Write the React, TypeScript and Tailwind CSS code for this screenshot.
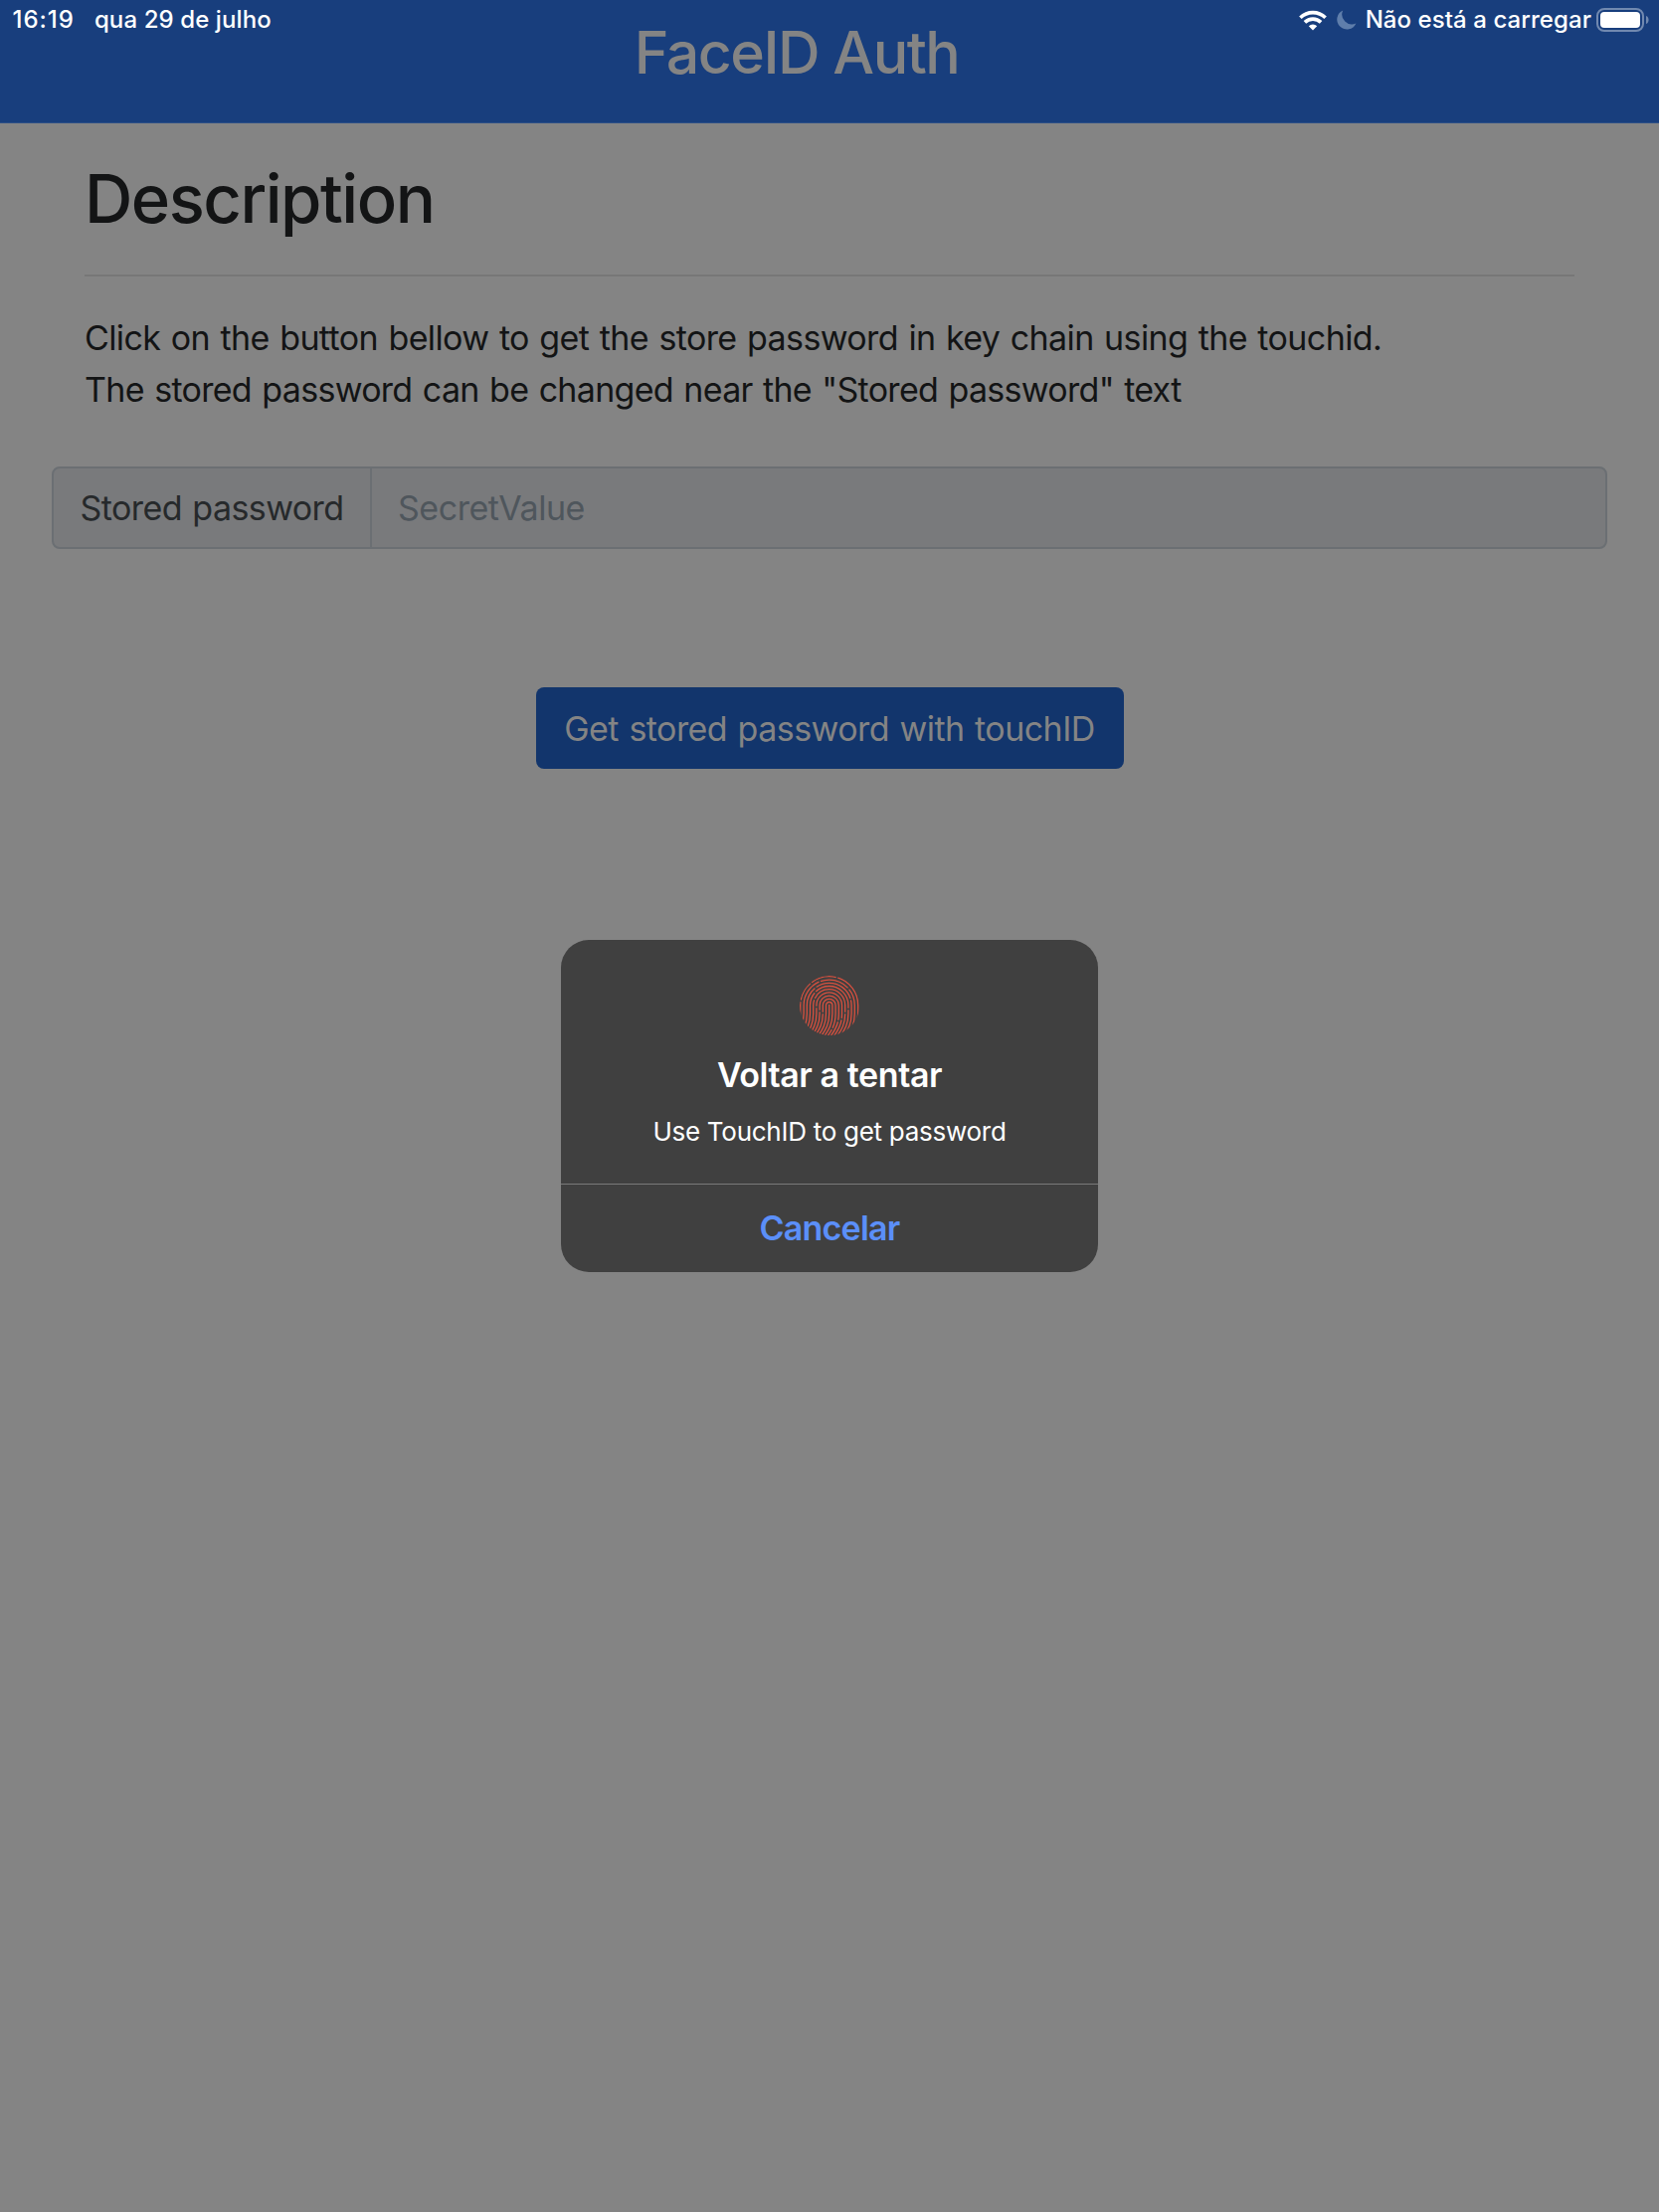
const rings = [
  { r: 3.2, dash: "120" },
  { r: 6.4, dash: "26 1.5 50 1.5 60" },
  { r: 9.6, dash: "28 1.5 50 1.5 60" },
  { r: 12.8, dash: "32 1.5 54 1.5 60" },
  { r: 16, dash: "40 1.5 50 1.5 60" },
  { r: 19.2, dash: "48 1.5 48 1.5 60" },
  { r: 22.4, dash: "54 1.5 42 1.5 60" },
  { r: 25.6, dash: "64 1.5 30 1.5 60" },
  { r: 29, dash: "38 1.5 20 1.5 26 1.5 60" },
];

function Fingerprint() {
  return (
    <svg width="60" height="60" viewBox="0 0 60 60" fill="none" stroke="#d8503f" strokeWidth="1.3">
      <clipPath id="pad">
        <circle cx="30" cy="30" r="30" />
      </clipPath>
      <g clipPath="url(#pad)">
        <path d="M29.7 29 V38 C29.7 48 26.7 54 20.7 62" />
        {rings.map(({ r, dash }) => (
          <path
            key={r}
            strokeDasharray={dash}
            d={`M${29.7 - r - 9} 62 C${29.7 - r - 3} 54 ${29.7 - r} 48 ${29.7 - r} 38 V29.7 A${r} ${r} 0 0 1 ${29.7 + r} 29.7 V38 C${29.7 + r} 48 ${29.7 + r - 3} 54 ${29.7 + r - 9} 62`}
          />
        ))}
      </g>
    </svg>
  );
}

function StatusBar() {
  return (
    <div className="absolute inset-x-0 top-0 flex h-10 items-center justify-between pl-[12.5px] pr-2.5 text-[24px] font-medium leading-none text-white">
      <div className="flex gap-5">
        <span className="tracking-[1px]">16:19</span>
        <span className="tracking-[0.1px]">qua 29 de julho</span>
      </div>
      <div className="flex items-center">
        <svg width="28" height="21" viewBox="0 0 28 21" fill="none" stroke="#fff" strokeWidth="3.6">
          <path d="M1.4 7.8a18 18 0 0 1 25.2 0M5.9 12.4a11.6 11.6 0 0 1 16.2 0" />
          <path d="M14 20.4 9.8 16.2a6 6 0 0 1 8.4 0z" fill="#fff" stroke="none" />
        </svg>
        <svg className="ml-2.5" width="20" height="20" viewBox="0 0 20 20" fill="#5f7eab">
          <path d="M6.2.4A10 10 0 1 0 19.4 13.6 10 10 0 0 1 6.2.4z" />
        </svg>
        <span className="ml-[9px] tracking-[0.07px]">Não está a carregar</span>
        <svg className="ml-1" width="54" height="24" viewBox="0 0 54 24" fill="none">
          <rect x="2" y="1" width="46" height="22" rx="7" stroke="#7189b0" strokeWidth="2" />
          <rect x="5" y="4" width="40" height="16" rx="4" fill="#fff" />
          <path d="M51 8c3.4 1 3.4 7 0 8z" fill="#7189b0" />
        </svg>
      </div>
    </div>
  );
}

function Dialog() {
  return (
    <div className="absolute left-[564px] top-[945px] flex h-[334px] w-[540px] flex-col items-center rounded-[28px] bg-[#404040] text-white">
      <div className="flex h-[246px] w-full flex-col items-center border-b border-[#7a7a7a] pt-9">
        <Fingerprint />
        <h3 className="mt-[17px] whitespace-nowrap text-[34px] font-semibold leading-[46px] tracking-[-0.42px]">Voltar a tentar</h3>
        <p className="mt-3 whitespace-nowrap text-[26px] leading-[44px] tracking-[-0.27px]">Use TouchID to get password</p>
      </div>
      <button className="flex w-full grow items-center justify-center pb-px text-[34px] font-semibold tracking-[-0.8px] text-[#5b8ff9]">Cancelar</button>
    </div>
  );
}

export default function App() {
  return (
    <div className="relative h-[2224px] w-[1668px] overflow-hidden bg-[#848484] font-['Inter',sans-serif] text-[#131415]">
      <header className="flex h-[124px] justify-center border-b border-[#2d4f86] bg-[#183e7d] pr-[66px] pt-[17px]">
        <h1 className="whitespace-nowrap text-[59px] font-medium leading-[72px] tracking-[-1.5px] text-[#848484]">FaceID Auth</h1>
      </header>
      <StatusBar />
      <main className="flex flex-col px-[52px]">
        <section className="px-[33px]">
          <h2 className="mt-9 text-[67px] font-medium leading-[80px] tracking-[-1.5px]">Description</h2>
          <hr className="mt-9 border-t-2 border-[#777777]" />
          <p className="mt-9 whitespace-nowrap text-[34px] leading-[52px] [word-spacing:1.5px]">
            <span className="tracking-[-0.61px]">Click on the button bellow to get the store password in key chain using the touchid.</span>
            <br />
            <span className="tracking-[-0.7px]">The stored password can be changed near the "Stored password" text</span>
          </p>
        </section>
        <div className="mt-[51px] flex h-[83px] items-center rounded-lg border-2 border-[#6b6f73] bg-[#797a7c] text-[34px] tracking-[-0.58px] [word-spacing:1.5px]">
          <label className="flex h-full w-[320px] items-center border-r-2 border-[#6b6f73] pl-[26.5px] text-[#26292b]">Stored password</label>
          <span className="ml-[26px] tracking-[-0.45px] text-[#4f565c]">SecretValue</span>
        </div>
        <button className="mt-[139px] flex h-[82px] w-[591px] items-center justify-center self-center rounded-lg bg-[#12356c] pt-px text-[34px] tracking-[-0.55px] text-[#848484] [word-spacing:1.5px]">
          Get stored password with touchID
        </button>
      </main>
      <Dialog />
    </div>
  );
}
